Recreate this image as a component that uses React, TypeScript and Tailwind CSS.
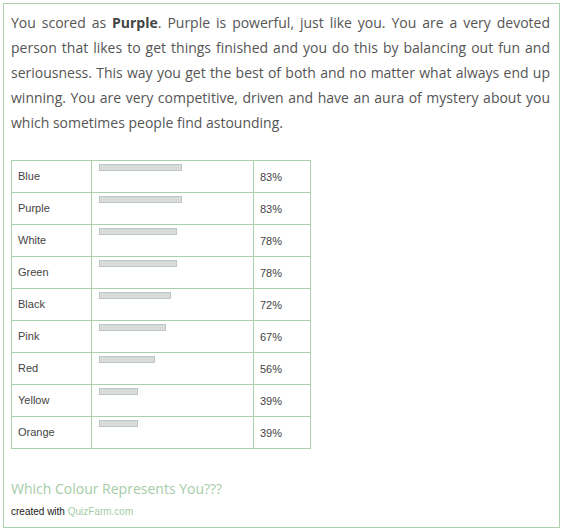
import React from 'react';

const results = [
  { name: 'Blue', pct: 83 },
  { name: 'Purple', pct: 83 },
  { name: 'White', pct: 78 },
  { name: 'Green', pct: 78 },
  { name: 'Black', pct: 72 },
  { name: 'Pink', pct: 67 },
  { name: 'Red', pct: 56 },
  { name: 'Yellow', pct: 39 },
  { name: 'Orange', pct: 39 },
];

// lines kept as in the original layout, justified to full width
const lines = [
  'person that likes to get things finished and you do this by balancing out fun and',
  'seriousness. This way you get the best of both and no matter what always end up',
  'winning. You are very competitive, driven and have an aura of mystery about you',
];

export default function App() {
  return (
    <div className="bg-white w-[564px] h-[532px] pt-[3px] pl-[3px]">
      <div className="w-[557px] h-[525px] border border-[#a9d1ad] pl-[7px] pr-[9px] pt-[6px]">
        {/* result description */}
        <div
          className="text-[14px] leading-[25px] text-[#555]"
          style={{ fontFamily: '"Open Sans", "Noto Sans", sans-serif' }}
        >
          <div className="text-justify [text-align-last:justify]">
            You scored as <b className="text-[#444]">Purple</b>. Purple is powerful, just like you. You are a very devoted
          </div>
          {lines.map((l) => (
            <div key={l} className="text-justify [text-align-last:justify]">
              {l}
            </div>
          ))}
          <div>which sometimes people find astounding.</div>
        </div>

        {/* score table */}
        <table
          className="mt-[25px] w-[300px] border-collapse text-[11px] text-[#444]"
          style={{ fontFamily: '"Liberation Sans", Arial, sans-serif' }}
        >
          <tbody>
            {results.map((r) => (
              <tr key={r.name} className="h-[32px]">
                <td className="w-[80px] border border-[#a9d1ad] pl-[6px] align-middle">{r.name}</td>
                <td className="w-[162px] border border-[#a9d1ad] pl-[7px] align-top pt-[3px]">
                  <div
                    className="h-[7px] bg-[#d9dcd9] border border-[#bcc8bc]"
                    style={{ width: r.pct }}
                  />
                </td>
                <td className="border border-[#a9d1ad] pl-[6px] align-middle pt-[2px]">{r.pct}%</td>
              </tr>
            ))}
          </tbody>
        </table>

        <div
          className="mt-[30px] text-[14px] leading-[20px] text-[#a6cca8]"
          style={{ fontFamily: '"Open Sans", "Noto Sans", sans-serif' }}
        >
          Which Colour Represents You???
        </div>
        <div
          className="mt-[5px] text-[10px] text-[#222]"
          style={{ fontFamily: '"Liberation Sans", Arial, sans-serif' }}
        >
          created with <span className="text-[#a6cca8]">QuizFarm.com</span>
        </div>
      </div>
    </div>
  );
}
